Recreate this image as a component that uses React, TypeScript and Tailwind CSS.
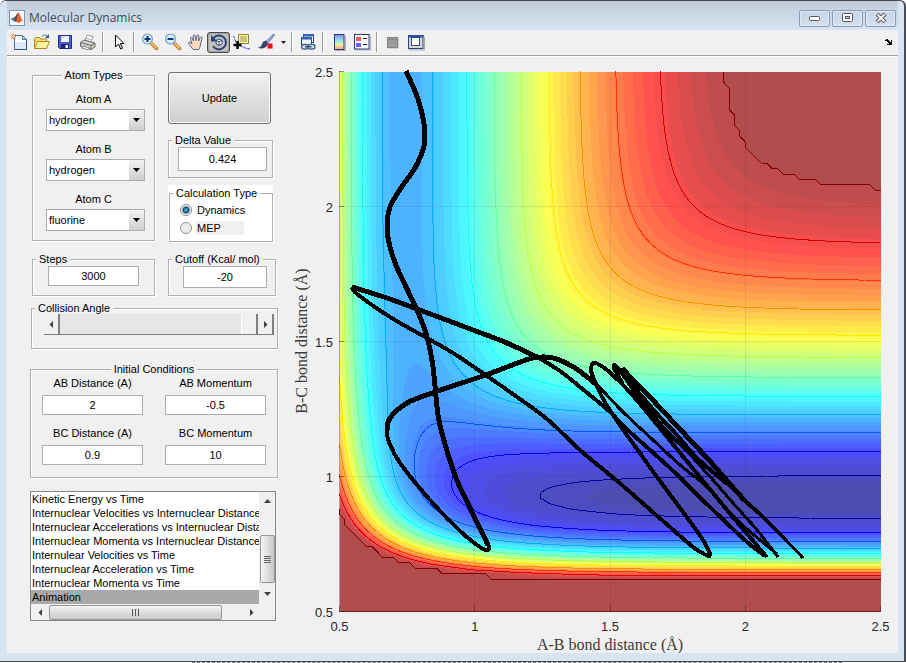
import { useMemo, useState, type ReactNode } from 'react';

/* ---------- Potential energy surface (LEPS, collinear H-H-F) ---------- */

const GRID = 100;
const CUTOFF = -22.1;
const DEPTH = -141.2;
const SATO = 0.18;
const BANDS = 50;

const HH = { d: 109.46, beta: 1.942, re: 0.7419 };
const HF = { d: 141.2, beta: 2.2187, re: 0.917 };

type Pair = typeof HH;
type Point = [number, number];

function coulombExchange(p: Pair, r: number) {
  const e = Math.exp(-p.beta * (r - p.re));
  const bonding = p.d * (e * e - 2 * e) * (1 + SATO);
  const anti = (p.d / 2) * (e * e + 2 * e) * (1 - SATO);
  return [(bonding + anti) / 2, (bonding - anti) / 2];
}

function energy(ab: number, bc: number) {
  const [q1, a1] = coulombExchange(HH, ab);
  const [q2, a2] = coulombExchange(HF, bc);
  const [q3, a3] = coulombExchange(HF, ab + bc);
  const root = Math.sqrt(0.5 * ((a1 - a2) ** 2 + (a2 - a3) ** 2 + (a3 - a1) ** 2));
  return Math.min(CUTOFF, (q1 + q2 + q3 - root) / (1 + SATO));
}

const sx = (i: number) => 339.5 + i * 5.41;
const sy = (j: number) => 611.5 - j * 5.4;

function jet(t: number, alpha: number) {
  const ch = (c: number) => Math.max(0, Math.min(1, 1.5 - Math.abs(4 * t - c)));
  const mix = (c: number) => Math.round(255 * (alpha * ch(c) + 1 - alpha));
  return `rgb(${mix(3)},${mix(2)},${mix(1)})`;
}

// Walks one grid cell and returns the part above the level plus its crossings
function cellShape(v: number[][], i: number, j: number, level: number) {
  const corners: Point[] = [[i, j], [i + 1, j], [i + 1, j + 1], [i, j + 1]];
  const area: Point[] = [];
  const cross: Point[] = [];
  for (let k = 0; k < 4; k++) {
    const [ax, ay] = corners[k];
    const [bx, by] = corners[(k + 1) % 4];
    const a = v[ay][ax];
    const b = v[by][bx];
    if (a >= level) area.push([ax, ay]);
    if (a >= level !== b >= level) {
      const t = (level - a) / (b - a);
      const p: Point = [ax + t * (bx - ax), ay + t * (by - ay)];
      area.push(p);
      cross.push(p);
    }
  }
  return { area, cross };
}

const pt = ([x, y]: Point) => `${sx(x).toFixed(1)} ${sy(y).toFixed(1)}`;

function bandPath(v: number[][], level: number) {
  let d = '';
  for (let j = 0; j < GRID; j++) {
    let start = -1;
    for (let i = 0; i <= GRID; i++) {
      const shape = i < GRID ? cellShape(v, i, j, level) : null;
      const full = shape !== null && shape.area.length === 4 && shape.cross.length === 0;
      if (full && start < 0) start = i;
      if (!full && start >= 0) {
        d += `M${pt([start, j])}L${pt([i, j])}L${pt([i, j + 1])}L${pt([start, j + 1])}Z`;
        start = -1;
      }
      if (shape && shape.cross.length > 0) d += 'M' + shape.area.map(pt).join('L') + 'Z';
    }
  }
  return d;
}

function linePath(v: number[][], level: number) {
  let d = '';
  for (let j = 0; j < GRID; j++) {
    for (let i = 0; i < GRID; i++) {
      const { cross } = cellShape(v, i, j, level);
      for (let k = 0; k + 1 < cross.length; k += 2) d += `M${pt(cross[k])}L${pt(cross[k + 1])}`;
    }
  }
  return d;
}

/* ---------- Trajectory ---------- */

const strands: { w: number; pts: Point[] }[] = [
  {
    w: 5,
    pts: [[406, 71], [418, 99], [424, 124], [424, 146], [415, 168], [401, 188], [390, 207], [387, 227], [390, 247], [398, 270], [417, 310], [427, 337], [433, 367], [438, 415], [445, 444], [456, 478], [471, 510], [488, 545]],
  },
  {
    w: 4,
    pts: [[471, 510], [485, 538], [489, 547], [486, 550], [477, 545], [460, 531], [430, 500], [400, 463], [389, 442], [387, 430], [391, 417], [402, 406]],
  },
  {
    w: 5,
    pts: [[387, 430], [390, 418], [407, 403], [435, 392], [483, 376], [507, 367], [533, 358], [553, 358], [575, 368], [597, 385]],
  },
  {
    w: 3,
    pts: [[575, 368], [597, 385], [623, 412], [653, 440], [680, 465], [707, 487], [730, 513], [767, 557]],
  },
  {
    w: 5,
    pts: [[352, 287], [387, 298], [417, 309], [473, 330], [507, 343], [537, 357]],
  },
  {
    w: 4,
    pts: [[507, 343], [537, 357], [560, 371], [580, 387], [610, 412], [630, 432], [670, 468], [713, 510], [747, 542], [765, 556]],
  },
  {
    w: 4,
    pts: [[352, 287], [357, 294], [390, 317], [425, 337], [453, 353], [487, 376], [517, 397], [547, 419], [580, 450], [610, 475], [630, 492], [663, 521], [693, 547], [706, 555], [711, 556]],
  },
  {
    w: 4,
    pts: [[711, 556], [703, 540], [683, 512], [657, 477], [637, 449], [617, 421], [602, 397], [593, 377], [591, 368], [595, 363], [607, 370], [623, 385]],
  },
  // Tight bundle in the exit valley
  { w: 4, pts: [[607, 370], [623, 385], [640, 404], [663, 432], [690, 465], [713, 493], [737, 522], [766, 556]] },
  { w: 3, pts: [[713, 493], [737, 520], [760, 540], [777, 554]] },
  { w: 4, pts: [[623, 384], [614, 368], [618, 368], [640, 399], [663, 427], [683, 447]] },
  { w: 3, pts: [[663, 427], [683, 447], [713, 480], [733, 503], [757, 530], [778, 557]] },
  { w: 4, pts: [[616, 367], [640, 394], [660, 417], [677, 435], [697, 458], [727, 484]] },
  { w: 5, pts: [[622, 368], [633, 380], [647, 394], [677, 426], [707, 458], [722, 475], [745, 501]] },
  { w: 4, pts: [[718, 474], [745, 501], [760, 514], [783, 537]] },
  { w: 3, pts: [[760, 514], [783, 537], [803, 558]] },
];

// Catmull-Rom through the sampled points
function smooth(p: Point[]) {
  let d = `M${p[0][0]} ${p[0][1]}`;
  for (let i = 0; i < p.length - 1; i++) {
    const a = p[Math.max(0, i - 1)];
    const b = p[i];
    const c = p[i + 1];
    const e = p[Math.min(p.length - 1, i + 2)];
    d += `C${b[0] + (c[0] - a[0]) / 6} ${b[1] + (c[1] - a[1]) / 6} ${c[0] - (e[0] - b[0]) / 6} ${c[1] - (e[1] - b[1]) / 6} ${c[0]} ${c[1]}`;
  }
  return d;
}

const contourLevels = [-136.8, -126.3, -116, -105.8, -95.3, -84.9, -74.4, -64, -53.5, -43.1, -32.6, CUTOFF];
const ticks = [0, 25, 50, 75, 100];

function SurfacePlot() {
  const { bands, lines } = useMemo(() => {
    const v: number[][] = [];
    for (let j = 0; j <= GRID; j++) {
      v.push([]);
      for (let i = 0; i <= GRID; i++) v[j].push(energy(0.5 + i * 0.02, 0.5 + j * 0.02));
    }
    const step = (CUTOFF - DEPTH) / BANDS;
    return {
      bands: Array.from({ length: BANDS }, (_, k) => ({
        d: bandPath(v, k === BANDS - 1 ? CUTOFF : DEPTH + (k + 1) * step),
        fill: jet(0.0156 + (0.969 * (k + 1)) / BANDS, 0.7),
      })),
      lines: contourLevels.map((l) => ({
        d: linePath(v, l),
        stroke: jet((l - DEPTH) / (CUTOFF - DEPTH), 1),
      })),
    };
  }, []);

  return (
    <svg viewBox="290 57 608 596" className="block min-w-0 flex-1" role="img" aria-label="Potential energy surface">
      <g shapeRendering="crispEdges">
        <rect x="339.5" y="71.5" width="541" height="540" fill={jet(0.0156, 0.7)} />
        {bands.map((b, i) => (
          <path key={i} d={b.d} fill={b.fill} />
        ))}
        {lines.map((l, i) => (
          <path key={i} d={l.d} stroke={l.stroke} fill="none" />
        ))}
        {ticks.slice(1, 4).map((t) => (
          <path key={t} d={`M${sx(t)} 71V611M339 ${sy(t)}H881`} stroke="#262626" strokeOpacity="0.1" />
        ))}
        <path d="M339.5 71V611.5" fill="none" stroke="#400000" strokeOpacity="0.35" />
        <path d="M339 611.5H881" fill="none" stroke="#400000" strokeOpacity="0.6" />
        {ticks.map((t) => (
          <path key={t} d={`M${sx(t)} 611v-5M339 ${sy(t)}h5`} stroke="#262626" strokeOpacity="0.5" />
        ))}
        {strands.map((s, i) => (
          <path key={i} d={smooth(s.pts)} stroke="#000" strokeWidth={s.w} strokeLinejoin="round" fill="none" />
        ))}
      </g>
      <g fill="#262626" fontSize="13" fontFamily="Liberation Sans, Arial, sans-serif">
        {ticks.map((t) => (
          <text key={t} x={sx(t)} y="631" textAnchor="middle">
            {0.5 + t / 50}
          </text>
        ))}
        {ticks.map((t) => (
          <text key={t} x="333" y={sy(t) + 5} textAnchor="end">
            {0.5 + t / 50}
          </text>
        ))}
      </g>
      <g fill="#3a3a3a" fontSize="16" fontFamily="Liberation Serif, Times New Roman, serif" textAnchor="middle">
        <text x="610" y="650">A-B bond distance (Å)</text>
        <text transform="translate(307 341) rotate(-90)">B-C bond distance (Å)</text>
      </g>
    </svg>
  );
}

/* ---------- Toolbar ---------- */

function Tool({ label, pressed, wide, children }: { label: string; pressed?: boolean; wide?: boolean; children: ReactNode }) {
  return (
    <button
      aria-label={label}
      className={`flex h-[21px] shrink-0 items-center justify-center ${wide ? 'w-[26px]' : 'w-[23px]'} ${
        pressed ? 'rounded-[3px] border border-[#4a4a4a] bg-[#c4c4c4] shadow-[inset_0_0_2px_#555]' : ''
      }`}
    >
      <svg width="18" height="18" viewBox="0 0 18 18" className="shrink-0">
        {children}
      </svg>
    </button>
  );
}

function Divider() {
  return <div className="mx-[3px] h-5 w-[2px] shrink-0 border-l border-[#9a9a9a] bg-white" />;
}

function Magnifier({ plus }: { plus?: boolean }) {
  return (
    <>
      <path d="M10.5 10.5l5 5" stroke="#b5762c" strokeWidth="3.4" strokeLinecap="round" />
      <path d="M10.5 10.2l4.8 4.8" stroke="#f7c06b" strokeWidth="1.8" strokeLinecap="round" />
      <circle cx="6.5" cy="6" r="4.9" fill="#d9f1fb" stroke="#7fa9d4" strokeWidth="1.4" />
      <path d="M3.5 6h6" stroke="#16357c" strokeWidth="2" />
      {plus && <path d="M6.5 3v6" stroke="#16357c" strokeWidth="2" />}
    </>
  );
}

function Toolbar() {
  return (
    <div className="flex h-[27px] items-center border-b border-white bg-[#f0f0f0] pb-[2px] shadow-[inset_0_-1px_0_#a0a0a0]">
      <Tool label="New Figure">
        <path d="M4.500 2.500h8l4 4v10h-12z" fill="#fff" />
        <path d="M5 9h11v7H5z" fill="#dbe8fa" />
        <path d="M4.500 2.500h8l4 4v10h-12z" fill="none" stroke="#5574b4" />
        <path d="M16.500 6.500v10h-12" fill="none" stroke="#33508f" />
        <path d="M12.500 2.500v4h4z" fill="#c2d5f1" stroke="#5574b4" />
        <path d="M3.500 1v5M1 3.500h5M1.500 1.500l4 4M5.500 1.500l-4 4" stroke="#e2703a" />
        <circle cx="3.500" cy="3.500" r="1.300" fill="#ffe9a8" />
      </Tool>
      <Tool label="Open File">
        <path d="M1.500 15.500V5.500l1-1h4l1 1.500h6v3" fill="#f8df7c" stroke="#b18a1d" />
        <path d="M1.500 15.500l3-7h12l-3 7z" fill="#fff0a0" stroke="#b18a1d" />
        <path d="M9 3.500c2-2 4-2 5 0" fill="none" stroke="#3b68a8" />
        <path d="M16 1v4h-4z" fill="#2d5c9c" />
      </Tool>
      <Tool label="Save Figure">
        <path d="M2.500 2.500h13v13h-12l-1-1z" fill="#4b5fcf" stroke="#232f93" />
        <path d="M5 3h8v6H5z" fill="#eef3ff" />
        <path d="M5 3h4L5 7z" fill="#c6d3f7" />
        <path d="M5 11h8v4.500H5z" fill="#1c2470" />
        <path d="M9.500 12h2.500v3H9.500z" fill="#fff" />
      </Tool>
      <Tool label="Print Figure">
        <path d="M6 8l2-6 6 1.500-2 6z" fill="#fff" stroke="#9a9a9a" />
        <path d="M1.500 9.500L5 7l11 3v4l-4 2.500-10.500-3z" fill="#cfcfcf" stroke="#6b6b6b" />
        <path d="M1.500 9.500l10.500 3 4-2.500M12 12.500v4" fill="none" stroke="#6b6b6b" />
        <path d="M4 13l6 1.700-1 2-6-1.500z" fill="#fff" stroke="#888" />
        <path d="M7 5.500l5 1" stroke="#aaa" />
        <circle cx="14" cy="12.500" r=".8" fill="#e0a020" />
      </Tool>
      <Divider />
      <Tool label="Edit Plot">
        <path d="M5.500 2v12l3-3 2.200 5 1.800-.8-2.200-4.700H14z" fill="#fff" stroke="#000" />
      </Tool>
      <Divider />
      <Tool label="Zoom In">
        <Magnifier plus />
      </Tool>
      <Tool label="Zoom Out">
        <Magnifier />
      </Tool>
      <Tool label="Pan">
        <path
          d="M6 16.500l-4-5.500c-1.200-1.600.4-2.600 1.500-1.500L5 11 3.500 5.500C3.200 4 4.700 3.500 5.200 5l1.300 3L6.300 3c0-1.600 1.800-1.600 2 0l.7 4.500 1-4.800c.3-1.400 2-1.100 1.900.3L11.500 8l1.800-3.500c.7-1.300 2.200-.6 1.800.8L13.800 10c-.5 3-.8 4.500-2 6.500z"
          fill="#ffdcbb"
          stroke="#4a5a8c"
          strokeWidth=".9"
        />
      </Tool>
      <Tool label="Rotate 3D" pressed>
        <path d="M3.200 5.500A7 7 0 1 1 3 13" fill="none" stroke="#2d4373" strokeWidth="2" />
        <path d="M1 2v6.500h6.500z" fill="#2d4373" />
        <path d="M9 6l3 1.300v3.600L9 12.500 6.200 10.900V7.300z" fill="#fff" stroke="#2d4373" />
        <path d="M6.200 7.300L9 8.700l3-1.400M9 8.700v3.800" fill="none" stroke="#2d4373" />
      </Tool>
      <Tool label="Data Cursor">
        <path d="M0 3c2 0 2 8 6 9 4 2 7 4 11 4" fill="none" stroke="#2c2cf0" strokeDasharray="3 1" />
        <path d="M5.500 1.500h10v9h-10z" fill="#fbf6a6" stroke="#8d853d" />
        <path d="M7 4h7M7 6h7M7 8h7" stroke="#9a9350" />
        <path d="M4.500 8v8M.5 12h8" stroke="#000" strokeWidth="2.400" />
      </Tool>
      <Tool label="Brush Data" wide>
        <path d="M16.500 1L9 8.500l1.500 2L17.500 2z" fill="#a8bde8" stroke="#3b518f" strokeWidth=".8" />
        <path d="M9.500 8c-2-.5-3.500.5-4.200 2.500C4.500 13 3 14.500.8 14.700c4 1.800 9.200.3 10-4.200z" fill="#36436a" />
        <path d="M10.500 10.500h5v5h-5z" fill="#f00b12" />
      </Tool>
      <button aria-label="Brush options" className="flex h-[21px] w-[9px] items-center justify-center">
        <svg width="5" height="3" viewBox="0 0 5 3">
          <path d="M0 0h5L2.500 3z" fill="#222" />
        </svg>
      </button>
      <Divider />
      <Tool label="Link Plot">
        <path d="M4.500 1.500h10v8h-10z" fill="#fff" stroke="#26427e" />
        <path d="M4 1h11v2.500H4z" fill="#3760b0" />
        <path d="M2.500 4.500h10v8h-10z" fill="#eef3fb" stroke="#26427e" />
        <path d="M2 4h11v2.500H2z" fill="#3760b0" />
        <rect x="2.500" y="11.500" width="7" height="4.500" rx="2.200" fill="#cfe0ef" stroke="#4e6a89" strokeWidth="1.400" />
        <rect x="9" y="11.500" width="7" height="4.500" rx="2.200" fill="#cfe0ef" stroke="#4e6a89" strokeWidth="1.400" />
        <path d="M6 13.700h6.500" stroke="#3d5878" strokeWidth="1.400" />
      </Tool>
      <Divider />
      <Tool label="Insert Colorbar">
        <defs>
          <linearGradient id="bar" x1="0" y1="0" x2="0" y2="1">
            <stop offset="0" stopColor="#8f86ee" />
            <stop offset=".4" stopColor="#8fe6f0" />
            <stop offset=".7" stopColor="#f2ee9a" />
            <stop offset="1" stopColor="#f49a8a" />
          </linearGradient>
        </defs>
        <path d="M5 17.500h10.500V3" fill="none" stroke="#b0b0b0" />
        <rect x="4.500" y="1.500" width="9.500" height="15" fill="url(#bar)" stroke="#26387a" />
      </Tool>
      <Tool label="Insert Legend">
        <path d="M2 17h15.500V3" fill="none" stroke="#b0b0b0" />
        <rect x="1.500" y="1.500" width="14.500" height="14.500" fill="#fff" stroke="#26387a" />
        <path d="M3 4h5v4H3z" fill="#e4605f" />
        <path d="M3 10h5v4H3z" fill="#6464ea" />
        <path d="M10 5.500h4M10 11.500h4" stroke="#000" />
      </Tool>
      <Divider />
      <Tool label="Hide Plot Tools">
        <path d="M4 5h10.500v10.500H4z" fill="#b0b0b0" />
        <rect x="3.500" y="4.500" width="10" height="10" fill="#9b9b9b" stroke="#828282" />
        <path d="M5 6.500h8" stroke="#868686" />
      </Tool>
      <Tool label="Show Plot Tools">
        <path d="M2 17h15.500V4" fill="none" stroke="#a8a8a8" />
        <rect x="1.500" y="2.500" width="14.500" height="13" fill="#d6d6d6" stroke="#26427e" />
        <path d="M1 2h15.500v2.500H1z" fill="#2b4f94" />
        <rect x="4.500" y="4.500" width="8" height="8" fill="#fff" stroke="#2b4f94" />
      </Tool>
      <button aria-label="Dock Figure" className="mr-1 ml-auto flex h-5 w-3 items-center justify-center">
        <svg width="7" height="6" viewBox="0 0 7 6" shapeRendering="crispEdges">
          <path d="M0 1h1v-1h2v1h1v1h1v1h1V1h1v5H2V5h2V4H3V3H2V2H0z" />
        </svg>
      </button>
    </div>
  );
}

/* ---------- Controls ---------- */

function Panel({ title, center, className, legendClass = 'bg-[#f0f0f0]', children }: { title: string; center?: boolean; className: string; legendClass?: string; children: ReactNode }) {
  return (
    <fieldset className={`min-w-0 border border-[#b0b0b0] shadow-[1px_1px_0_#fff,inset_1px_1px_0_#fff] ${className}`}>
      <legend className={`px-[3px] leading-3 ${center ? 'mx-auto' : 'ml-[3px]'} ${legendClass}`}>{title}</legend>
      {children}
    </fieldset>
  );
}

const fieldClass = 'block h-5 border border-[#abadb3] bg-white text-center leading-3 outline-none';

function AtomSelect({ name, initial }: { name: string; initial: string }) {
  const id = name.replace(' ', '-').toLowerCase();
  return (
    <div>
      <label htmlFor={id} className="mb-1 block text-center leading-3">
        {name}
      </label>
      <div className="relative ml-[13px] w-[99px]">
        <select id={id} defaultValue={initial} className="block h-[22px] w-full appearance-none border border-[#abadb3] bg-white pl-[2px] leading-4 outline-none">
          <option>hydrogen</option>
          <option>fluorine</option>
          <option>chlorine</option>
        </select>
        <span className="pointer-events-none absolute top-px right-px flex h-5 w-[15px] items-center justify-center bg-linear-to-b from-[#f2f2f2] to-[#cfcfcf]">
          <svg width="7" height="4" viewBox="0 0 7 4">
            <path d="M0 0h7L3.500 4z" />
          </svg>
        </span>
      </div>
    </div>
  );
}

function Condition({ label, value }: { label: string; value: string }) {
  return (
    <label className="block">
      <span className="mb-[6px] block text-center leading-3">{label}</span>
      <input type="text" defaultValue={value} className={`w-full ${fieldClass}`} />
    </label>
  );
}

const plots = [
  'Kinetic Energy vs Time',
  'Internuclear Velocities vs Internuclear Distance',
  'Internuclear Accelerations vs Internuclear Distance',
  'Internuclear Momenta vs Internuclear Distance',
  'Internulear Velocities vs Time',
  'Internuclear Acceleration vs Time',
  'Internuclear Momenta vs Time',
  'Animation',
];

function Arrow({ d }: { d: string }) {
  return (
    <svg width="7" height="7" viewBox="0 0 7 7" className="shrink-0">
      <path d={d} fill="#404040" />
    </svg>
  );
}

function PlotList() {
  const [plot, setPlot] = useState('Animation');
  return (
    <div className="mt-[13px] grid h-[130px] w-[246px] grid-cols-[1fr_16px] grid-rows-[112px_16px] border border-[#828790] bg-[#f0f0f0]">
      <select
        size={8}
        aria-label="Plot"
        value={plot}
        onChange={(e) => setPlot(e.target.value)}
        className="block h-[112px] w-full min-w-0 appearance-none overflow-hidden bg-white p-0 outline-none"
      >
        {plots.map((p) => (
          <option key={p} className="block h-[14px] min-h-0 overflow-hidden p-0 pt-px pl-px leading-[14px] whitespace-nowrap text-black checked:bg-[#a9a9a9] checked:text-black">
            {p}
          </option>
        ))}
      </select>
      <div className="flex flex-col items-center">
        <span className="flex h-[43px] items-start pt-[6px]">
          <Arrow d="M0 5h7L3.500 1z" />
        </span>
        <span className="flex h-12 w-[15px] flex-col items-center justify-center gap-px rounded-[2px] border border-[#979797] bg-linear-to-r from-[#f4f4f4] to-[#c9c9c9]">
          <i className="h-px w-[7px] bg-[#666]" />
          <i className="h-px w-[7px] bg-[#666]" />
          <i className="h-px w-[7px] bg-[#666]" />
          <i className="h-px w-[7px] bg-[#666]" />
        </span>
        <span className="flex flex-1 items-center">
          <Arrow d="M0 2h7L3.500 6z" />
        </span>
      </div>
      <div className="flex items-center">
        <span className="flex w-[18px] justify-center">
          <Arrow d="M5 0v7L1.500 3.500z" />
        </span>
        <span className="flex h-[15px] w-[173px] items-center justify-center gap-[2px] rounded-[2px] border border-[#979797] bg-linear-to-b from-[#f4f4f4] to-[#c9c9c9]">
          <i className="h-[7px] w-px bg-[#555]" />
          <i className="h-[7px] w-px bg-[#555]" />
          <i className="h-[7px] w-px bg-[#555]" />
        </span>
        <span className="flex flex-1 justify-end pr-1">
          <Arrow d="M2 0v7l3.500-3.500z" />
        </span>
      </div>
      <div />
    </div>
  );
}

function Controls() {
  const [mode, setMode] = useState('Dynamics');
  return (
    <div className="w-[283px] shrink-0 pt-3 pl-[23px] text-[11px] text-black">
      <div className="flex gap-[13px] pl-[2px]">
        <Panel title="Atom Types" center className="h-[172px] w-[123px]">
          <div className="flex flex-col gap-3 pt-3">
            <AtomSelect name="Atom A" initial="hydrogen" />
            <AtomSelect name="Atom B" initial="hydrogen" />
            <AtomSelect name="Atom C" initial="fluorine" />
          </div>
        </Panel>
        <div className="w-[105px] pt-[3px]">
          <button className="block h-[52px] w-[103px] rounded-[3px] border border-[#707070] bg-linear-to-b from-[#f2f2f2] from-0% via-[#e0e0e0] via-50% to-[#cfcfcf] pt-px shadow-[inset_0_0_0_1px_#fafafa]">
            Update
          </button>
          <Panel title="Delta Value" className="mt-[10px] h-[44px]">
            <input type="text" aria-label="Delta Value" defaultValue="0.424" className="mt-px ml-[9px] block h-6 w-[89px] border border-[#abadb3] bg-white text-center outline-none" />
          </Panel>
          <div className="mt-[7px] h-[58px] bg-white pt-[2px] pl-px">
            <Panel title="Calculation Type" className="h-[55px] pb-0" legendClass="bg-white">
              <div className="flex flex-col gap-1 pt-1 pl-[10px]">
                {['Dynamics', 'MEP'].map((m) => (
                  <label key={m} className="flex h-[14px] items-center gap-1">
                    <input
                      type="radio"
                      name="mode"
                      checked={mode === m}
                      onChange={() => setMode(m)}
                      className="size-3 appearance-none rounded-full border border-[#8e8f8f] bg-[radial-gradient(#f4f4f4,#dcdcdc)] shadow-[inset_0_0_0_1px_#f4f4f4] checked:bg-[radial-gradient(circle,#5bc0e8_0%,#12436b_45%,#e9eef2_58%)]"
                    />
                    <span className={`w-12 pl-px leading-[14px] ${m === 'MEP' ? 'bg-[#f0f0f0]' : ''}`}>{m}</span>
                  </label>
                ))}
              </div>
            </Panel>
          </div>
        </div>
      </div>

      <div className="mt-[10px] flex gap-[13px] pl-[2px]">
        <Panel title="Steps" className="h-[43px] w-[123px]">
          <input type="text" aria-label="Steps" defaultValue="3000" className={`mx-auto mt-px w-[91px] ${fieldClass}`} />
        </Panel>
        <Panel title="Cutoff (Kcal/ mol)" className="h-[43px] w-[108px]">
          <input type="text" aria-label="Cutoff" defaultValue="-20" className="mt-px ml-[14px] block h-[22px] w-[84px] border border-[#abadb3] bg-white text-center outline-none" />
        </Panel>
      </div>

      <Panel title="Collision Angle" className="mt-[6px] ml-px h-[47px] w-[247px]">
        <div className="ml-3 flex h-[21px] w-[230px] border-b border-[#808080]">
          <button aria-label="Decrease angle" className="flex w-4 items-center justify-center border-r-2 border-[#808080]">
            <Arrow d="M5 0v7L1.500 3.500z" />
          </button>
          <input
            type="range"
            aria-label="Collision Angle"
            min={0}
            max={180}
            defaultValue={180}
            className="h-5 min-w-0 flex-1 appearance-none bg-[#e6e6e6] [&::-webkit-slider-thumb]:h-5 [&::-webkit-slider-thumb]:w-[17px] [&::-webkit-slider-thumb]:appearance-none [&::-webkit-slider-thumb]:border-r-2 [&::-webkit-slider-thumb]:border-l [&::-webkit-slider-thumb]:border-r-[#808080] [&::-webkit-slider-thumb]:border-l-white [&::-webkit-slider-thumb]:bg-[#f0f0f0]"
          />
          <button aria-label="Increase angle" className="flex w-4 items-center justify-center border-r-2 border-[#808080]">
            <Arrow d="M2 0v7l3.500-3.500z" />
          </button>
        </div>
      </Panel>

      <Panel title="Initial Conditions" center className="mt-[14px] h-[115px] w-[248px]">
        <div className="grid grid-cols-2 gap-x-[22px] gap-y-3 px-[11px] pt-[2px]">
          <Condition label="AB Distance (A)" value="2" />
          <Condition label="AB Momentum" value="-0.5" />
          <Condition label="BC Distance (A)" value="0.9" />
          <Condition label="BC Momentum" value="10" />
        </div>
      </Panel>

      <PlotList />
    </div>
  );
}

function TitleBar() {
  const frame = 'flex h-[17px] w-[31px] items-center justify-center rounded-[2px] border border-[#8b9bb5] shadow-[inset_0_0_0_1px_#dfe8f3]';
  return (
    <header className="flex h-[29px] items-center bg-linear-to-b from-[#bfcbd9] to-[#d7e4f2] pt-[5px] pr-[2px] pl-[2px] font-['Open_Sans',sans-serif]">
      <svg width="16" height="16" viewBox="0 0 16 16">
        <rect x=".5" y=".5" width="15" height="15" fill="#f4f7fb" stroke="#8494a8" />
        <path d="M1.500 9l4-2 2.500 3-2 2z" fill="#3f7cba" />
        <path d="M5.500 7c2-.5 2.500-4.500 4-4.500L8 10l-2 2z" fill="#7a3b2a" />
        <path d="M9.500 2.500c1.500 1 2.500 7 5 9-2-1-3-.5-4.500 2C9 12.500 8 11.500 6 12c2-1 3-6 3.500-9.500z" fill="#e0622a" />
      </svg>
      <h1 className="ml-1 text-[12px] leading-4 text-[#404a58]">Molecular Dynamics</h1>
      <div className="ml-auto flex gap-[2px]">
        <button aria-label="Minimize" className={frame}>
          <svg width="12" height="6" viewBox="0 0 12 6">
            <rect x=".5" y="1.500" width="10" height="4" rx="1" fill="#fff" stroke="#535666" />
          </svg>
        </button>
        <button aria-label="Maximize" className={frame}>
          <svg width="12" height="10" viewBox="0 0 12 10">
            <rect x=".5" y=".5" width="10" height="8" rx="1" fill="#fff" stroke="#535666" />
            <rect x="3.500" y="3.500" width="4" height="2" fill="#cfdae8" stroke="#535666" />
          </svg>
        </button>
        <button aria-label="Close" className={frame}>
          <svg width="12" height="10" viewBox="0 0 12 10">
            <path d="M2 1l8 8M10 1L2 9" stroke="#535666" strokeWidth="4" />
            <path d="M2.500 1.500l7 7M9.500 1.500l-7 7" stroke="#fff" strokeWidth="2" />
          </svg>
        </button>
      </div>
    </header>
  );
}

export default function App() {
  return (
    <div className="bg-white font-['Liberation_Sans',Arial,sans-serif]">
      <div className="overflow-hidden rounded-t-md border-t border-r-2 border-b border-[#4a4a50] bg-[#d7e4f2] pr-[6px] pb-2 pl-[7px]">
        <TitleBar />
        <Toolbar />
        <main className="flex items-start bg-[#f0f0f0]">
          <Controls />
          <SurfacePlot />
        </main>
      </div>
      <div className="mr-16 ml-48 h-px border-t border-dashed border-[#777]" />
    </div>
  );
}
